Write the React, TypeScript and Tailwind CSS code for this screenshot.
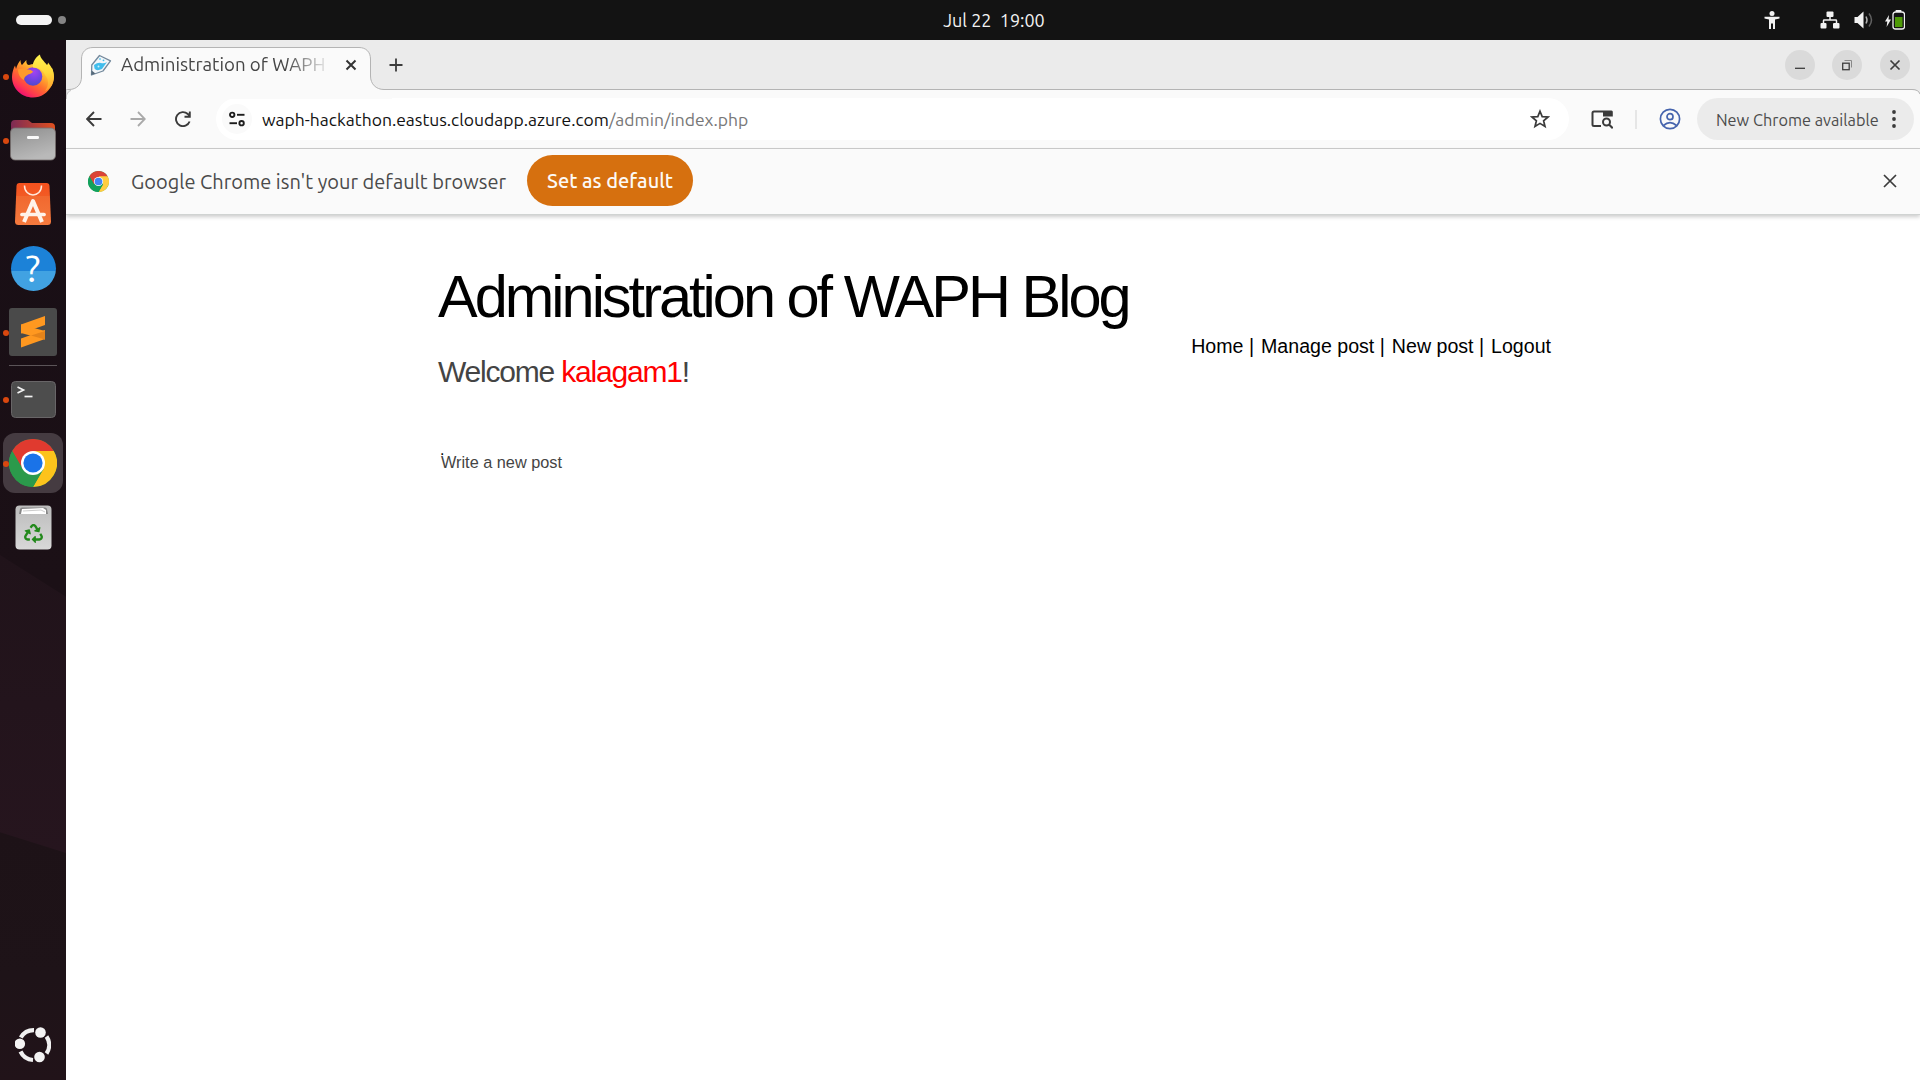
import type { ReactNode } from 'react';
import { FaRecycle } from 'react-icons/fa';

function Firefox() {
  return (
    <svg viewBox="0 0 42 44" className="h-[44px] w-[42px]">
      <defs>
        <linearGradient id="ffBody" x1="0.85" y1="0.1" x2="0.2" y2="0.95">
          <stop offset="0" stopColor="#fff44f" />
          <stop offset="0.3" stopColor="#ffb32e" />
          <stop offset="0.55" stopColor="#ff6f2c" />
          <stop offset="0.8" stopColor="#ff3750" />
          <stop offset="1" stopColor="#eb0878" />
        </linearGradient>
        <radialGradient id="ffGlobe" cx="0.55" cy="0.25" r="0.8">
          <stop offset="0" stopColor="#a344f0" />
          <stop offset="0.5" stopColor="#7542e5" />
          <stop offset="1" stopColor="#4a4bc8" />
        </radialGradient>
        <linearGradient id="ffFlame" x1="0.5" y1="0" x2="0.5" y2="1">
          <stop offset="0" stopColor="#fff44f" />
          <stop offset="0.5" stopColor="#ffd83a" />
          <stop offset="1" stopColor="#ff9a2e" />
        </linearGradient>
      </defs>
      <path d="M4 15C5 11 7 8 8.500 6C8.500 8.500 9 10 10 11C12 9 13 7 14.500 6C14 9 15 10.500 17 11C22 9 28 10 31 14L40 14C42 18 42.500 25 40 31C36 39 29 43.500 21 43.500C10 43.500 0 35 0 23C0 19 1.500 14 3 11.500Z" fill="url(#ffBody)" />
      <circle cx="21" cy="22.500" r="9.300" fill="url(#ffGlobe)" />
      <path d="M28 0.500C28 4 32 7 35 11C36 10 36 9 36 8.500C39 12 42 17 42 23C42 30 38 35 33 37C37 32 37 25 33 21C31 16 27 14 21 13.500C20 8 24 3 28 0.500Z" fill="url(#ffFlame)" />
      <path d="M6 15.500C10 14 13 14 15 15.500C18 15 20 16.500 21 17.500C20 20 17 19.500 15.500 21C13 22 12 24 12 26C8 24 6 20 6 15.500Z" fill="#ff9a2c" />
    </svg>
  );
}

function Files() {
  return (
    <svg viewBox="0 0 46 42" className="h-[42px] w-[46px]">
      <defs>
        <linearGradient id="flBack" x1="0" y1="0" x2="1" y2="0">
          <stop offset="0" stopColor="#7c2a55" />
          <stop offset="1" stopColor="#e1501f" />
        </linearGradient>
        <linearGradient id="flFront" x1="0" y1="0" x2="0.4" y2="1">
          <stop offset="0" stopColor="#8e8e8e" />
          <stop offset="1" stopColor="#b9b9b9" />
        </linearGradient>
      </defs>
      <path d="M1 5Q1 1 5 1H18L22 4H41Q45 4 45 8V20H1Z" fill="url(#flBack)" />
      <rect x="0.500" y="9" width="45" height="32" rx="4.500" fill="url(#flFront)" stroke="#77706f" strokeWidth="0.800" />
      <rect x="17" y="17" width="12" height="3" rx="1.200" fill="#fafafa" />
    </svg>
  );
}

function AppCenter() {
  return (
    <svg viewBox="0 0 36 42" className="h-[42px] w-[36px]">
      <defs>
        <linearGradient id="acBag" x1="0" y1="0" x2="0" y2="1">
          <stop offset="0" stopColor="#f4511e" />
          <stop offset="0.300" stopColor="#f25a24" />
          <stop offset="0.310" stopColor="#f1682f" />
          <stop offset="1" stopColor="#f57a3e" />
        </linearGradient>
      </defs>
      <path d="M1.500 3Q1.700 0 4.500 0H31.500Q34.300 0 34.500 3L36 38.500Q36 42 32.500 42H3.500Q0 42 0 38.500Z" fill="url(#acBag)" />
      <path d="M9.500 2.500C9.500 15 26.500 15 26.500 2.500" fill="none" stroke="#ffe9dc" strokeWidth="1.500" />
      <path d="M9 39L18 18L27 39" fill="none" stroke="#fff3ea" strokeWidth="4" strokeLinejoin="round" />
      <path d="M7 31.500H29" stroke="#fff3ea" strokeWidth="3.700" strokeLinecap="round" />
    </svg>
  );
}

function Help() {
  return (
    <div className="flex size-[45px] items-center justify-center rounded-full bg-linear-to-b from-[#1c82d8] from-55% to-[#41a2e2] to-55% font-['Ubuntu','Noto_Sans',sans-serif] text-[38px] leading-none text-white">
      ?
    </div>
  );
}

function Sublime() {
  return (
    <svg viewBox="0 0 48 48" className="size-[48px]">
      <rect width="48" height="48" rx="3" fill="#4a4a4a" />
      <path d="M12 16.500L36 8V17L12 25.500Z" fill="#ff9820" />
      <path d="M12 30.500L36 22V31L12 39.500Z" fill="#ff9820" />
      <path d="M12 16.500L36 23V31.500L12 25Z" fill="#ff9820" />
      <path d="M22 27.500L36 23V31.500Z" fill="#e4831a" />
    </svg>
  );
}

function Terminal() {
  return (
    <svg viewBox="0 0 45 37" className="h-[37px] w-[45px]">
      <rect x="0.500" y="0.500" width="44" height="36" rx="4" fill="#4d4d4d" stroke="#686567" />
      <path d="M6.500 6L12.500 9L6.500 12" fill="none" stroke="#f4f4f4" strokeWidth="1.700" />
      <path d="M13.500 15.500H21.500" stroke="#f4f4f4" strokeWidth="1.700" />
    </svg>
  );
}

function ChromeLogo({ className, flat = false }: { className: string; flat?: boolean }) {
  return (
    <svg viewBox="0 0 48 48" className={className}>
      <circle cx="24" cy="24" r="24" fill={flat ? '#12a15c' : '#2b9a4b'} />
      <path d="M24 24L3.200 12A24 24 0 0 1 44.800 12Z" fill={flat ? '#db4437' : '#e03a2f'} />
      <path d="M24 12H44.800A24 24 0 0 1 24 48L34.400 30Z" fill={flat ? '#ffcd40' : '#fcc31c'} />
      <path d="M3.200 12L13.600 30L24 24V12Z" fill={flat ? '#db4437' : '#e03a2f'} />
      <path d="M3.200 12A24 24 0 0 0 24 48L34.400 30L24 34L13.600 30Z" fill={flat ? '#12a15c' : '#2b9a4b'} />
      <circle cx="24" cy="24" r={flat ? 10.5 : 12} fill="#fff" />
      <circle cx="24" cy="24" r={flat ? 8.8 : 9.6} fill={flat ? '#4285f4' : '#1a73e8'} />
    </svg>
  );
}

function Trash() {
  return (
    <div className="relative">
      <svg viewBox="0 0 37 45" className="h-[45px] w-[37px]">
        <defs>
          <linearGradient id="trBin" x1="0" y1="0" x2="0" y2="1">
            <stop offset="0" stopColor="#bcbcbc" />
            <stop offset="1" stopColor="#d8d8d8" />
          </linearGradient>
        </defs>
        <rect x="0.500" y="0.500" width="36" height="44" rx="4" fill="url(#trBin)" />
        <path d="M4 9L5 4Q5.500 2.500 7 2.500H30Q31.500 2.500 32 4L33 9Z" fill="#858585" />
        <path d="M6 9L7 4L28 3L31 5V9Z" fill="#fff" />
        <path d="M8 6L26 5L30 7" fill="none" stroke="#b5b5b5" strokeWidth="0.700" />
      </svg>
      <FaRecycle className="absolute left-[9px] top-[19px] size-[19px] text-[#23891c]" />
    </div>
  );
}

function UbuntuLogo() {
  return (
    <svg viewBox="0 0 36 36" className="size-[36px]" fill="none">
      <path d="M5.800 10.500A15 15 0 0 1 19 3.100" stroke="#f0f0f0" strokeWidth="4.200" />
      <path d="M31.500 9.500A15 15 0 0 1 31.500 26.500" stroke="#f0f0f0" strokeWidth="4.200" />
      <path d="M18 33A15 15 0 0 1 5.500 24.500" stroke="#f0f0f0" strokeWidth="4.200" />
      <circle cx="25.500" cy="5.500" r="5.300" fill="#f3f3f3" />
      <circle cx="4.800" cy="16.700" r="5.300" fill="#f3f3f3" />
      <circle cx="24.500" cy="30" r="5.300" fill="#f3f3f3" />
    </svg>
  );
}

function DockItem({ children, running = false, active = false }: { children: ReactNode; running?: boolean; active?: boolean }) {
  return (
    <div className="relative flex h-16 w-full shrink-0 items-center justify-center">
      <div className={active ? 'flex size-[60px] items-center justify-center rounded-xl bg-[#453b41]' : 'flex'}>{children}</div>
      {running && <span className="absolute left-[3px] top-[30px] size-[5.500px] rounded-full bg-[#d9480f]" />}
    </div>
  );
}

function Dock() {
  return (
    <nav className="relative isolate flex w-[66px] shrink-0 flex-col items-center bg-[linear-gradient(180deg,#180e15_0%,#1b1016_52%,#1d1217_76%,#1e1318_90%,#211319_100%)] pt-[4px]">
      <div className="absolute inset-x-0 top-[515px] -z-10 h-[298px] bg-linear-to-b from-[#20131a] to-[#26151e] [clip-path:polygon(0_0,100%_14%,100%_100%,0_93%)]" />
      <DockItem running><Firefox /></DockItem>
      <DockItem running><Files /></DockItem>
      <DockItem><AppCenter /></DockItem>
      <DockItem><Help /></DockItem>
      <DockItem running><Sublime /></DockItem>
      <div className="my-px h-px w-12 shrink-0 bg-[#5b5458]" />
      <DockItem running><Terminal /></DockItem>
      <DockItem running active><ChromeLogo className="size-[48px]" /></DockItem>
      <DockItem><Trash /></DockItem>
      <div className="mt-auto pb-[17px]"><UbuntuLogo /></div>
    </nav>
  );
}

function TopBar() {
  return (
    <header className="grid h-10 shrink-0 grid-cols-3 items-center bg-[#131313]">
      <div className="flex items-center gap-1.5 pl-4">
        <span className="h-2.5 w-9 rounded-full bg-[#f4f4f4]" />
        <span className="size-2 rounded-full bg-[#858585]" />
      </div>
      <div className="whitespace-pre pl-[68px] text-center text-[18px] leading-[38px] text-[#f2f2f2]">Jul 22  19:00</div>
      <div className="flex items-center justify-end pr-[15px] text-[#f2f2f2]">
        <svg viewBox="0 0 16 18" className="mr-[40px] h-[18px] w-4" fill="currentColor">
          <circle cx="8" cy="2.600" r="2.500" />
          <path d="M0.500 5.800H15.500V7.400L11 8.400V18H9V12.500H7V18H5V8.400L0.500 7.400Z" />
        </svg>
        <svg viewBox="0 0 20 18" className="mr-[14px] h-[18px] w-5" fill="currentColor">
          <rect x="6.500" y="0.500" width="7" height="5.500" rx="1" />
          <rect x="0.500" y="12" width="6" height="5.500" rx="1" />
          <rect x="13" y="12" width="6.500" height="5.500" rx="1" />
          <path d="M10 5V9M3.500 13V9.700Q3.500 9 4.200 9H15.800Q16.500 9 16.500 9.700V13" fill="none" stroke="currentColor" strokeWidth="1.500" />
        </svg>
        <svg viewBox="0 0 20 18" className="mr-[11px] h-[18px] w-5" fill="none" stroke="currentColor">
          <path d="M0.500 6H3.500L9.500 0.500V17.500L3.500 12H0.500Z" fill="currentColor" stroke="none" />
          <path d="M12 5.500Q14 9 12 12.500" strokeWidth="1.500" opacity="0.700" />
          <path d="M15 2.500Q20 9 15 15.500" strokeWidth="1.500" opacity="0.350" />
        </svg>
        <svg viewBox="0 0 20 20" className="h-5 w-5" fill="none">
          <path d="M4 5L0 11.500H2.300L1.600 17L6 9.500H3.500Z" fill="currentColor" />
          <rect x="8" y="2" width="11.500" height="17" rx="2.500" stroke="currentColor" strokeWidth="1.300" />
          <rect x="10.500" y="0" width="6" height="2" rx="0.800" fill="currentColor" />
          <rect x="10" y="7" width="7.500" height="10" fill="#4e9a06" />
        </svg>
      </div>
    </header>
  );
}

function TabStrip() {
  return (
    <div className="flex h-[50px] shrink-0 bg-[#ebebeb]">
      <div className="relative flex w-[326px] shrink-0 items-start">
        <svg viewBox="0 0 326 59" className="absolute left-0 top-0 z-10 h-[59px] w-[326px]">
          <path d="M0 49.500H3C11 49.500 15.500 44 15.500 37V19C15.500 12 20 7.500 27 7.500H293C300 7.500 304.500 12 304.500 19V36C304.500 44 310 49.500 318 49.500H326V59H0Z" fill="#fafafa" />
          <path d="M0 49.500H3C11 49.500 15.500 44 15.500 37V19C15.500 12 20 7.500 27 7.500H293C300 7.500 304.500 12 304.500 19V36C304.500 44 310 49.500 318 49.500H326" fill="none" stroke="#b4b4b4" />
          <path d="M0 49.500V59C0 54 2.500 51 5 50.500" fill="#ebebeb" stroke="#c2c2c2" />
        </svg>
        <div className="relative z-20 flex h-[42px] w-full items-center pl-[24px] pt-[8px]">
          <svg viewBox="0 0 22 22" className="size-[22px] shrink-0" fill="none">
            <path d="M9.500 1.500L20.500 6.800L13 17L1.500 21L1.800 11Z" fill="#f3f6f9" stroke="#73899c" strokeWidth="1.300" strokeLinejoin="round" />
            <path d="M4 11Q8 8 11 9T17 8L12 15Q6.500 17.500 4.500 14.500Z" fill="#41bdec" />
            <path d="M1.300 21L1.600 16.500L5.500 19.600Z" fill="#56697a" />
            <circle cx="10" cy="5" r="1.100" fill="#7fd2f0" />
            <circle cx="13.500" cy="6.300" r="0.900" fill="#41bdec" />
            <circle cx="8.500" cy="12.500" r="1" fill="#c9effc" />
          </svg>
          <span className="ml-[9px] w-[206px] overflow-hidden whitespace-nowrap text-[18.700px] leading-6 text-[#454545] [mask-image:linear-gradient(90deg,#000_80%,transparent_102%)]">
            Administration of WAPH
          </span>
          <svg viewBox="0 0 12 12" className="ml-[18px] size-[12px]" stroke="#333" strokeWidth="2">
            <path d="M1.500 1.500L10.500 10.500M10.500 1.500L1.500 10.500" />
          </svg>
        </div>
      </div>
      <div className="flex flex-1 items-center justify-between border-b border-[#b4b4b4]">
        <svg viewBox="0 0 14 14" className="-ml-[3px] size-[14px]" stroke="#3c3c3c" strokeWidth="1.800">
          <path d="M7 0.500V13.500M0.500 7H13.500" />
        </svg>
        <div className="flex items-center pr-[10px]">
          <span className="mr-[17px] flex size-[30px] items-center justify-center rounded-full bg-[#dadada]">
            <svg viewBox="0 0 12 12" className="size-3" stroke="#3d3d3d" strokeWidth="1.300"><path d="M1 9.300H11" /></svg>
          </span>
          <span className="mr-[18px] flex size-[30px] items-center justify-center rounded-full bg-[#dadada]">
            <svg viewBox="0 0 12 12" className="size-3" fill="none" stroke="#3d3d3d">
              <rect x="1.700" y="4.200" width="6.500" height="6.500" strokeWidth="1.300" />
              <path d="M3.500 1.500H10.500V8.500" stroke="#888" />
            </svg>
          </span>
          <span className="flex size-[30px] items-center justify-center rounded-full bg-[#dadada]">
            <svg viewBox="0 0 12 12" className="size-3" stroke="#3d3d3d" strokeWidth="1.700"><path d="M1.500 1.500L10.500 10.500M10.500 1.500L1.500 10.500" /></svg>
          </span>
        </div>
      </div>
    </div>
  );
}

function Toolbar() {
  return (
    <div className="relative flex h-[59px] shrink-0 items-center border-b border-[#cccccc] bg-[#fafafa] pl-[20px] pr-[6px]">
      <svg viewBox="0 0 8 6" className="absolute -top-px right-0 h-[6px] w-[8px]" fill="none">
        <path d="M0 0H8V6Q7 0.500 0 0.500Z" fill="#ebebeb" />
        <path d="M0 0.500Q6.500 0.500 8 5" stroke="#b4b4b4" />
      </svg>
      <svg viewBox="0 0 16 16" className="size-[16px]" fill="none" stroke="#3b3b3b" strokeWidth="1.900"><path d="M15.500 8H1.500M8 1L1.200 8L8 15" /></svg>
      <svg viewBox="0 0 16 16" className="ml-[28px] size-[16px]" fill="none" stroke="#a9a9a9" strokeWidth="1.800"><path d="M0.500 8H14.500M8 1L14.800 8L8 15" /></svg>
      <svg viewBox="0 0 16 16" className="ml-[29px] size-[16px]" fill="none" stroke="#3b3b3b" strokeWidth="1.900">
        <path d="M14.600 10.500A7 7 0 1 1 12.800 3L14.500 4.700M14.800 0.500V5.800H9.500" />
      </svg>
      <div className="ml-[25px] flex h-[42px] w-[1353px] shrink-0 items-center rounded-full bg-white pl-[6px] pr-[19px]">
        <span className="flex size-[30px] items-center justify-center rounded-full bg-[#fafafa]">
          <svg viewBox="0 0 16 16" className="size-[16px]" fill="none" stroke="#1c1c1c" strokeWidth="1.900">
            <circle cx="3.200" cy="3.800" r="2.200" /><path d="M8 3.800H15.500" />
            <circle cx="12.600" cy="12.200" r="2.200" /><path d="M0.500 12.200H8" />
          </svg>
        </span>
        <span className="ml-[10px] pt-[2px] text-[17.500px] text-[#111]">
          waph-hackathon.eastus.cloudapp.azure.com<span className="text-[#777]">/admin/index.php</span>
        </span>
        <svg viewBox="0 0 20 20" className="ml-auto size-[20px]" fill="none" stroke="#3b3b3b" strokeWidth="1.700">
          <path d="M10 2.200L12.200 7.600L18 8L13.600 11.800L15 17.500L10 14.400L5 17.500L6.400 11.800L2 8L7.800 7.600Z" />
        </svg>
      </div>
      <svg viewBox="0 0 22 20" className="ml-[22px] h-[20px] w-[22px]" fill="none" stroke="#3b3b3b" strokeWidth="2">
        <path d="M10 17H3Q1.500 17 1.500 15.500V4Q1.500 2.500 3 2.500H12" />
        <path d="M12 1.500H20.500Q21.800 1.500 21.800 3V7.500H12Z" fill="#3b3b3b" stroke="none" />
        <circle cx="15.500" cy="13" r="3.500" /><path d="M18 15.500L21.700 19.200" />
      </svg>
      <span className="ml-[22px] h-[19px] w-[2px] bg-[#e6e6e6]" />
      <svg viewBox="0 0 22 22" className="ml-[21.500px] size-[22px]" fill="none" stroke="#4664ad" strokeWidth="1.700">
        <circle cx="11" cy="11" r="9.600" /><circle cx="11" cy="8.700" r="3" /><path d="M4.500 17.500Q11 11.800 17.500 17.500" />
      </svg>
      <div className="ml-auto flex h-[42px] w-[217px] items-center rounded-full bg-[#ebebeb] pl-[19px]">
        <span className="whitespace-nowrap pt-[2px] text-[16.300px] text-[#4b4b4b]">New Chrome available</span>
        <svg viewBox="0 0 4 18" className="ml-auto mr-[18px] h-[18px] w-1" fill="#3b3b3b">
          <circle cx="2" cy="2" r="1.900" /><circle cx="2" cy="9" r="1.900" /><circle cx="2" cy="16" r="1.900" />
        </svg>
      </div>
    </div>
  );
}

function InfoBar() {
  return (
    <div className="relative z-10 flex h-[66px] shrink-0 items-center border-b border-[#d0d3d2] bg-[#fafafa] pl-[22px] pr-[23px] shadow-[0_2px_4px_rgba(0,0,0,0.2)]">
      <ChromeLogo flat className="size-[21px]" />
      <span className="ml-[22px] whitespace-nowrap pt-px text-[20px] text-[#4a4a4a]">Google Chrome isn't your default browser</span>
      <span className="ml-[21px] flex h-[51px] w-[166px] -translate-y-px items-center justify-center rounded-full bg-[#d6700f] pt-px text-[20px] font-medium text-[#fdfaf6]">
        Set as default
      </span>
      <svg viewBox="0 0 14 14" className="ml-auto size-[14px] -translate-y-px" stroke="#3b3b3b" strokeWidth="1.700"><path d="M1 1L13 13M13 1L1 13" /></svg>
    </div>
  );
}

function Page() {
  const links = ['Home', 'Manage post', 'New post', 'Logout'];
  return (
    <main className="flex-1 bg-white pl-[372px] pt-[46px] font-['Liberation_Sans',Arial,sans-serif]">
      <div className="flex w-[1113px] flex-col">
        <h1 className="h-[72px] whitespace-nowrap text-[59.500px] leading-[72px] tracking-[-3px] text-black">Administration of WAPH Blog</h1>
        <div className="mt-px flex h-[24px] items-center justify-end whitespace-pre text-[19.600px] leading-6 text-black">
          {links.map((l, i) => (
            <span key={l} className={i ? 'ml-[7px]' : ''}>{i < links.length - 1 ? `${l} |` : l}</span>
          ))}
        </div>
        <h2 className="mt-[-4px] h-[36px] text-[30px] leading-9 tracking-[-1.200px] text-[#444]">
          Welcome <span className="text-[#f00]">kalagam1</span>!
        </h2>
        <div className="mt-[57px] h-[5px] pl-[2px] text-[16px] leading-[5px] text-black">.</div>
        <p className="pl-[3px] text-[16.300px] leading-[20px] text-[#444]">Write a new post</p>
      </div>
    </main>
  );
}

export default function App() {
  return (
    <div className="flex h-[1080px] w-[1920px] flex-col overflow-hidden bg-white font-['Ubuntu','Noto_Sans',sans-serif]">
      <TopBar />
      <div className="flex min-h-0 flex-1">
        <Dock />
        <div className="flex min-w-0 flex-1 flex-col">
          <TabStrip />
          <Toolbar />
          <InfoBar />
          <Page />
        </div>
      </div>
    </div>
  );
}
